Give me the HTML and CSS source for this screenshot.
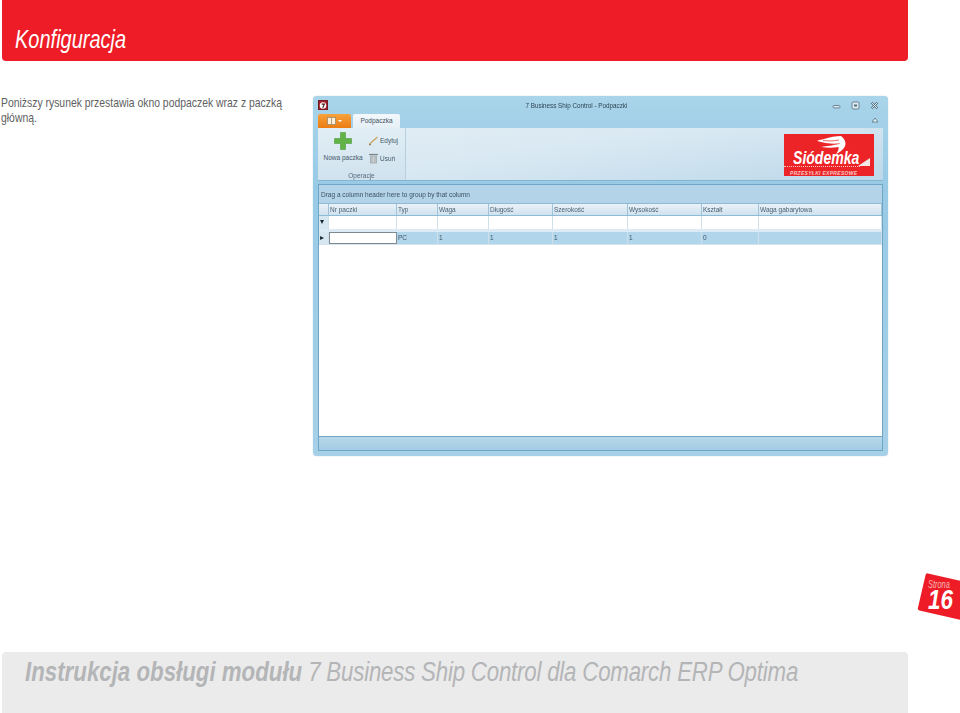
FILE: index.html
```html
<!DOCTYPE html>
<html lang="pl">
<head>
<meta charset="utf-8">
<title>Konfiguracja</title>
<link rel="stylesheet" href="styles.css">
</head>
<body>
<div class="page">
  <header class="top-bar"><h1>Konfiguracja</h1></header>
  <main class="content">
    <p class="intro">Poniższy rysunek przestawia okno podpaczek wraz z paczką główną.</p>
    <section class="window">
      <div class="titlebar">
        <span class="app-icon"><svg width="9" height="9" viewBox="0 0 9 9"><circle cx="4.5" cy="4.5" r="3.6" fill="#fff"/><path d="M3 3h3L4.2 7" fill="none" stroke="#4a1a20" stroke-width="1.3"/></svg></span>
        <span class="title">7 Business Ship Control - Podpaczki</span>
        <span class="controls">
          <svg width="9" height="9" viewBox="0 0 9 9"><rect x="1" y="4.5" width="7" height="2.4" rx="1" fill="#dfeaf2" stroke="#54707f" stroke-width=".8"/></svg>
          <svg width="9" height="9" viewBox="0 0 9 9"><rect x="1" y="1" width="7" height="7" rx="1" fill="#dfeaf2" stroke="#54707f" stroke-width=".8"/><rect x="3" y="3.5" width="3" height="2" fill="#54707f"/></svg>
          <svg width="9" height="9" viewBox="0 0 9 9"><path d="M1.5 1.5l6 6M7.5 1.5l-6 6" stroke="#54707f" stroke-width="2.2"/><path d="M1.5 1.5l6 6M7.5 1.5l-6 6" stroke="#dfeaf2" stroke-width="1"/></svg>
        </span>
      </div>
      <div class="tabs">
        <span class="file-tab"><svg width="9" height="8" viewBox="0 0 9 8"><rect x=".5" y=".5" width="8" height="7" fill="#fbeedb" stroke="#a08a68" stroke-width=".8"/><path d="M4.5 1v6" stroke="#a08a68" stroke-width=".8"/></svg><i class="caret"></i></span>
        <span class="tab">Podpaczka</span>
        <svg class="collapse" width="8" height="6" viewBox="0 0 8 6"><path d="M1 5l3-4 3 4z" fill="#e6f0f6" stroke="#54707f" stroke-width=".8"/></svg>
      </div>
      <div class="ribbon">
        <div class="group">
          <div class="group-items">
            <div class="big-btn">
              <svg width="18" height="18" viewBox="0 0 18 18"><path d="M6.500 .5h5v6h6v5h-6v6h-5v-6h-6v-5h6z" fill="#62b347" stroke="#4f9a3b" stroke-width=".6"/></svg>
              <span>Nowa paczka</span>
            </div>
            <div class="small-btns">
              <span class="small-btn"><svg width="11" height="11" viewBox="0 0 11 11"><path d="M1 9.500L9.500 2" stroke="#c8a25a" stroke-width="1.200"/><path d="M1 10l2-.5" stroke="#8a7650"/></svg>Edytuj</span>
              <span class="small-btn"><svg width="11" height="11" viewBox="0 0 11 11"><path d="M1 1.500h9" stroke="#7c8488" stroke-width="1.200"/><path d="M2 2.500h7v8H2z" fill="#a9b0b3"/><path d="M4 3.500v6M5.500 3.500v6M7 3.500v6" stroke="#e4e8ea" stroke-width=".6"/></svg>Usuń</span>
            </div>
          </div>
          <div class="group-label">Operacje</div>
        </div>
        <div class="logo">
          <svg class="wing" width="29" height="18" viewBox="0 0 29 18"><path d="M7 3C13 1 19 0 24 0c3 2 4.500 5 4.500 8-.5 4-4 7.500-9.500 10 2-3 3-5 2.500-7C16 12 10 12 4 11c6-1 12-2 17-3.500C15 8 6 7 0 5c2-1 4.500-1.500 7-2z" fill="#fff"/><path d="M6 4.500c5 .6 11 .6 16-.5M5 9.500c6 .2 12-.5 17.500-2" fill="none" stroke="#ec2327" stroke-width=".7"/></svg>
          <span class="logo-name">Siódemka</span>
          <i class="logo-tri"></i>
          <span class="logo-sub">PRZESYŁKI EXPRESOWE</span>
        </div>
      </div>
      <div class="grid-panel">
        <div class="group-by">Drag a column header here to group by that column</div>
        <div class="grid-row head">
          <span></span><span>Nr paczki</span><span>Typ</span><span>Waga</span><span>Długość</span><span>Szerokość</span><span>Wysokość</span><span>Kształt</span><span>Waga gabarytowa</span>
        </div>
        <div class="grid-row filter">
          <span class="marker">▾</span><span></span><span></span><span></span><span></span><span></span><span></span><span></span><span></span>
        </div>
        <div class="grid-row data">
          <span class="marker">▸</span><span class="focus"></span><span>PC</span><span>1</span><span>1</span><span>1</span><span>1</span><span>0</span><span></span>
        </div>
        <div class="grid-empty"></div>
        <div class="statusbar"></div>
      </div>
    </section>
  </main>
  <div class="page-badge"><small>Strona</small><b>16</b></div>
  <footer class="bottom-bar"><span class="bottom-text"><strong>Instrukcja obsługi modułu</strong> 7 Business Ship Control dla Comarch ERP Optima</span></footer>
</div>
</body>
</html>
```
FILE: styles.css
```css
* { box-sizing: border-box; }
html, body { margin: 0; padding: 0; background: #fff; }
.page {
  position: relative;
  width: 960px;
  height: 713px;
  overflow: hidden;
  display: flex;
  flex-direction: column;
  font-family: "Liberation Sans", sans-serif;
}
.top-bar {
  flex: none;
  width: 906px;
  height: 61px;
  margin-left: 2px;
  background: #ed1c27;
  border-radius: 0 0 4px 4px;
  padding: 25px 0 0 13px;
}
.top-bar h1 {
  margin: 0;
  font-size: 25px;
  line-height: 28px;
  font-weight: 400;
  font-style: italic;
  color: #fff;
  transform: scaleX(.8);
  transform-origin: 0 0;
}
.content {
  flex: 1;
  display: flex;
  align-items: flex-start;
  padding: 35px 0 0 1px;
}
.intro {
  flex: none;
  width: 352px;
  margin: -1px -40px 0 0;
  font-size: 13px;
  line-height: 15px;
  color: #5e5f61;
  transform: scaleX(.8);
  transform-origin: 0 0;
}
.window {
  flex: none;
  width: 575px;
  height: 360px;
  display: flex;
  flex-direction: column;
  padding: 0 5px 5px;
  background: linear-gradient(#a9d4ea, #98cae6 25%, #a6d0e7);
  border-radius: 4px;
  box-shadow: 0 0 1px #7fa9c0;
  font-size: 6.5px;
  color: #4a5a66;
  filter: blur(.4px);
}
.titlebar {
  flex: none;
  height: 18px;
  display: flex;
  align-items: center;
}
.app-icon {
  width: 10px;
  height: 10px;
  background: #a8202e;
  display: flex;
  align-items: center;
  justify-content: center;
  border: 1px solid #6d1a22;
}
.title {
  flex: 1;
  text-align: center;
  font-size: 6.3px;
  color: #2f4452;
  padding-right: 7px;
}
.controls {
  display: flex;
  gap: 10px;
  margin-right: 4px;
}
.tabs {
  flex: none;
  height: 14px;
  display: flex;
  align-items: flex-end;
}
.file-tab {
  width: 33px;
  height: 14px;
  background: linear-gradient(#f7a23c, #ec7c12);
  border-radius: 2px 2px 0 0;
  display: flex;
  align-items: center;
  justify-content: center;
  gap: 2px;
}
.caret {
  width: 0;
  height: 0;
  border: 2px solid transparent;
  border-top-color: #fff;
  margin-top: 2px;
}
.tab {
  width: 47px;
  height: 14px;
  margin-left: 2px;
  background: linear-gradient(#f3f8fb, #e4eff6);
  border-radius: 2px 2px 0 0;
  text-align: center;
  line-height: 14px;
  color: #3e5160;
}
.collapse {
  margin: 0 4px 5px auto;
}
.ribbon {
  flex: none;
  height: 53px;
  display: flex;
  justify-content: space-between;
  background: linear-gradient(172deg, #e3eef5 0%, #d8e8f2 45%, #bcd8ea 100%);
  border-bottom: 1px solid #84b6d2;
}
.group {
  width: 88px;
  border-right: 1px solid #b6d0e0;
  display: flex;
  flex-direction: column;
  background: linear-gradient(#e2eef5, #cfe2ee);
}
.group-items {
  height: 43px;
  display: flex;
  padding: 4px 0 0 5px;
}
.big-btn {
  width: 40px;
  display: flex;
  flex-direction: column;
  align-items: center;
  gap: 4px;
  white-space: nowrap;
  color: #46596a;
}
.small-btns {
  display: flex;
  flex-direction: column;
  gap: 7px;
  padding: 3px 0 0 5px;
}
.small-btn {
  display: flex;
  align-items: center;
  gap: 1px;
  height: 11px;
  white-space: nowrap;
  color: #46596a;
}
.group-label {
  text-align: center;
  line-height: 9px;
  color: #55697a;
}
.logo {
  width: 90px;
  height: 42px;
  margin: 6px 9px 0 0;
  background: #ec2327;
  position: relative;
  display: flex;
  flex-direction: column;
  align-items: flex-start;
  padding: 15px 0 0 9px;
}
.wing {
  position: absolute;
  left: 33px;
  top: 2px;
}
.logo-name {
  font-size: 19px;
  line-height: 17px;
  font-weight: 700;
  font-style: italic;
  color: #fff;
  transform: scaleX(.74);
  transform-origin: 0 0;
  border-bottom: 1px dotted transparent;
}
.logo::after {
  content: "";
  position: absolute;
  left: 0;
  top: 32px;
  width: 76px;
  border-top: 1px dotted #f7c9c4;
}
.logo-tri {
  position: absolute;
  right: 4px;
  top: 24px;
  width: 0;
  height: 0;
  border-style: solid;
  border-width: 0 0 8px 12px;
  border-color: transparent transparent #f4e8e4 transparent;
}
.logo-sub {
  font-size: 5px;
  line-height: 7px;
  font-weight: 700;
  font-style: italic;
  letter-spacing: .3px;
  color: #f7c9c4;
  white-space: nowrap;
  margin: 3px 0 0 -3px;
}
.grid-panel {
  flex: 1;
  margin-top: 3px;
  display: flex;
  flex-direction: column;
  border: 1px solid #6fa5c5;
  background: #fff;
  min-height: 0;
}
.group-by {
  flex: none;
  height: 18px;
  line-height: 20px;
  padding-left: 2px;
  background: #b3d4e8;
  color: #3c5060;
}
.grid-row {
  flex: none;
  display: grid;
  grid-template-columns: 10px 68px 41px 51px 64px 75px 74px 57px 1fr;
  height: 13px;
  line-height: 12px;
}
.grid-row span {
  padding-left: 1px;
  border-right: 1px solid #cfe0ea;
  overflow: hidden;
  white-space: nowrap;
}
.head {
  background: linear-gradient(#eaf2f7, #cfe2ee);
  border-top: 1px solid #8dbbd6;
  border-bottom: 1px solid #8dbbd6;
  color: #4a5f70;
}
.head span { border-right-color: #9fc4da; }
.filter {
  background: #fff;
}
.marker {
  font-size: 8px;
  color: #1c262d;
  background: #d7e7f1;
}
.data {
  height: 16px;
  padding-top: 3px;
  background: linear-gradient(#dcebf3 3px, #b1d6ec 3px);
  border-bottom: 1px solid #d4e4ee;
  color: #3f5260;
}
.data .focus {
  background: #fff;
  border: 1px solid #7f8a90;
}
.grid-empty { flex: 1; background: #fff; }
.statusbar {
  flex: none;
  height: 14px;
  border-top: 1px solid #6fa5c5;
  background: linear-gradient(#b8d8ea, #a3cce4);
}
.page-badge {
  position: absolute;
  left: 917px;
  top: 573px;
  width: 43px;
  height: 47px;
  padding: 7px 0 0 11px;
  display: flex;
  flex-direction: column;
  align-items: flex-start;
  color: #fff;
  overflow: hidden;
}
.page-badge::before {
  content: "";
  position: absolute;
  left: 9px;
  top: 0;
  width: 60px;
  height: 38px;
  background: #ed1c27;
  border-radius: 2px;
  transform: rotate(13deg);
  transform-origin: 0 0;
}
.page-badge small, .page-badge b {
  position: relative;
  font-style: italic;
  transform-origin: 0 0;
}
.page-badge small {
  font-size: 10px;
  line-height: 10px;
  color: #f7b9b5;
  transform: scaleX(.74);
}
.page-badge b {
  font-size: 28px;
  line-height: 20px;
  transform: scaleX(.8);
}
.bottom-bar {
  position: absolute;
  left: 2px;
  top: 652px;
  width: 906px;
  height: 61px;
  background: #ebebeb;
  border-radius: 4px 4px 0 0;
  padding: 5px 0 0 23px;
  font-size: 27px;
  line-height: 30px;
  font-style: italic;
  color: #b4b5b7;
}
.bottom-text {
  display: block;
  width: 960px;
  white-space: nowrap;
  letter-spacing: -.25px;
  transform: scaleX(.825);
  transform-origin: 0 0;
}
.bottom-text strong { font-weight: 700; letter-spacing: 0; }
```
